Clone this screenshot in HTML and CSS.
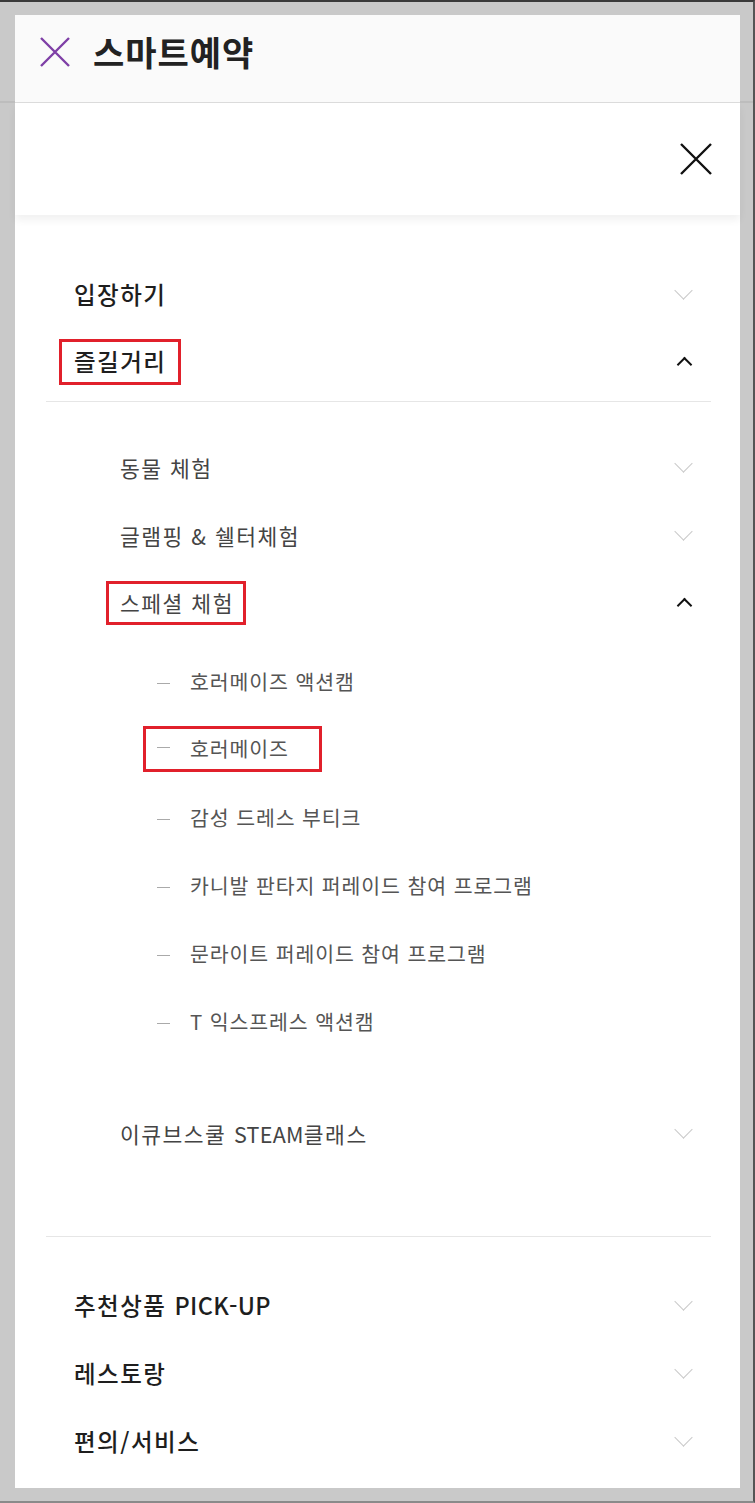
FILE: index.html
```html
<!DOCTYPE html>
<html lang="ko">

<head>
  <meta charset="UTF-8">
  <meta name="viewport" content="width=device-width, initial-scale=1.0">
  <title>스마트예약</title>
  <link rel="stylesheet" href="styles.css">
</head>

<body>
  <div class="screen">
    <div class="sheet">
      <header class="topbar">
        <svg class="topbar-close" width="32" height="32" viewBox="0 0 32 32">
          <path d="M2 2L30 30M30 2L2 30" />
        </svg>
        <h1 class="topbar-title">스마트예약</h1>
      </header>

      <div class="sheet-head">
        <svg class="sheet-close" width="34" height="34" viewBox="0 0 34 34">
          <path d="M2 2L32 32M32 2L2 32" />
        </svg>
      </div>

      <nav class="menu">
        <ul class="menu-list">
          <li class="menu-item">
            <span class="menu-label">입장하기</span>
            <span class="chev down"></span>
          </li>
          <li class="menu-item">
            <span class="menu-label mark mark-top">즐길거리</span>
            <span class="chev up"></span>
          </li>
        </ul>

        <div class="group">
          <ul class="sub-list">
            <li class="sub-item">
              <span class="sub-label">동물 체험</span>
              <span class="chev down"></span>
            </li>
            <li class="sub-item">
              <span class="sub-label">글램핑 &amp; 쉘터체험</span>
              <span class="chev down"></span>
            </li>
            <li class="sub-item">
              <span class="sub-label mark mark-sub">스페셜 체험</span>
              <span class="chev up"></span>
            </li>
          </ul>

          <ul class="leaf-list">
            <li class="leaf-item"><span class="leaf-label">호러메이즈 액션캠</span></li>
            <li class="leaf-item"><span class="leaf-label mark mark-leaf">호러메이즈</span></li>
            <li class="leaf-item"><span class="leaf-label">감성 드레스 부티크</span></li>
            <li class="leaf-item"><span class="leaf-label">카니발 판타지 퍼레이드 참여 프로그램</span></li>
            <li class="leaf-item"><span class="leaf-label">문라이트 퍼레이드 참여 프로그램</span></li>
            <li class="leaf-item"><span class="leaf-label">T 익스프레스 액션캠</span></li>
          </ul>

          <ul class="sub-list sub-last">
            <li class="sub-item">
              <span class="sub-label">이큐브스쿨 <span class="latin">STEAM</span>클래스</span>
              <span class="chev down"></span>
            </li>
          </ul>
        </div>

        <ul class="menu-list menu-bottom">
          <li class="menu-item">
            <span class="menu-label">추천상품 <span class="latin">PICK-UP</span></span>
            <span class="chev down"></span>
          </li>
          <li class="menu-item">
            <span class="menu-label">레스토랑</span>
            <span class="chev down"></span>
          </li>
          <li class="menu-item">
            <span class="menu-label">편의/서비스</span>
            <span class="chev down"></span>
          </li>
        </ul>
      </nav>
    </div>
  </div>
</body>

</html>
```

FILE: styles.css
```css
* {
  box-sizing: border-box;
}

html,
body {
  margin: 0;
  padding: 0;
}

body {
  font-family: "Noto Sans CJK KR", "Noto Sans", sans-serif;
  background: #c9c9c9;
}

.screen {
  height: 1503px;
  overflow: hidden;
  border-top: 2px solid #3a3a3a;
  border-right: 2px solid #555;
  border-bottom: 2px solid #8a8a8a;
  padding: 13px 13px 0 15px;
  background: linear-gradient(to bottom, #c9c9c9 99px, #bdbdbd 99px, #bdbdbd 101px, #c9c9c9 101px);
}

.sheet {
  background: #fff;
  height: 1473px;
}

/* top bar of the page behind */
.topbar {
  height: 88px;
  background: #fafafa;
  border-bottom: 1px solid #dcdcdc;
  display: flex;
  align-items: center;
  padding: 0 0 14px 24px;
}

.topbar-close {
  stroke: #7e3fa6;
  stroke-width: 2.4;
  width: 32px;
  height: 32px;
  margin-right: 22px;
}

.topbar-title {
  margin: 0;
  font-size: 34px;
  font-weight: 700;
  color: #222;
  letter-spacing: 1px;
}

.sheet-head {
  height: 112px;
  display: flex;
  align-items: center;
  justify-content: flex-end;
  padding: 0 27px 0 0;
  box-shadow: 0 5px 8px rgba(0, 0, 0, 0.06);
  position: relative;
}

.sheet-close {
  stroke: #111;
  stroke-width: 2.4;
}

.menu {
  padding: 45px 29px 0 31px;
}

ul {
  list-style: none;
  margin: 0;
  padding: 0;
}

.menu-item,
.sub-item,
.leaf-item {
  height: 68px;
  display: flex;
  align-items: center;
  justify-content: space-between;
}

.menu-item {
  padding: 0 19px 0 28px;
}

.menu-label {
  font-size: 23.5px;
  font-weight: 500;
  letter-spacing: 1.5px;
  color: #1e1e1e;
}

.latin {
  letter-spacing: 0.3px;
}

.group {
  border-top: 1px solid #e6e6e6;
  border-bottom: 1px solid #e6e6e6;
  margin-top: 5px;
  padding: 31px 0 69px;
}

.sub-item {
  padding: 0 19px 0 74px;
}

.sub-label {
  font-size: 21.5px;
  letter-spacing: 1.5px;
  color: #444;
}

.leaf-list {
  padding: 10px 0 44px;
}

.leaf-item {
  padding-left: 111px;
}

.leaf-label {
  font-size: 20.5px;
  letter-spacing: 0.9px;
  color: #555;
}

.leaf-label::before {
  content: "";
  display: inline-block;
  width: 13px;
  border-top: 1px solid #aaa;
  vertical-align: middle;
  margin: 0 20px 2px 0;
}

.menu-bottom {
  padding-top: 34px;
}

/* annotation boxes */
.mark {
  border: 3px solid #e1202b;
  display: inline-flex;
  align-items: center;
}

.mark-top {
  height: 46px;
  padding: 0 12px 2px 12px;
  margin-left: -15px;
}

.mark-sub {
  height: 44px;
  padding: 0 9px 2px 11px;
  margin-left: -14px;
}

.mark-leaf {
  height: 46px;
  padding: 0 30px 2px 11px;
  margin-left: -14px;
}

/* chevrons */
.chev {
  width: 18px;
  height: 18px;
  position: relative;
}

.chev::after {
  content: "";
  position: absolute;
  transform: rotate(45deg);
}

.chev.down::after {
  top: -1px;
  left: 3px;
  width: 12px;
  height: 12px;
  border-right: 1.5px solid #c9c9c9;
  border-bottom: 1.5px solid #c9c9c9;
}

.chev.up::after {
  top: 6px;
  left: 5px;
  width: 9px;
  height: 9px;
  border-left: 2.5px solid #111;
  border-top: 2.5px solid #111;
}
```
